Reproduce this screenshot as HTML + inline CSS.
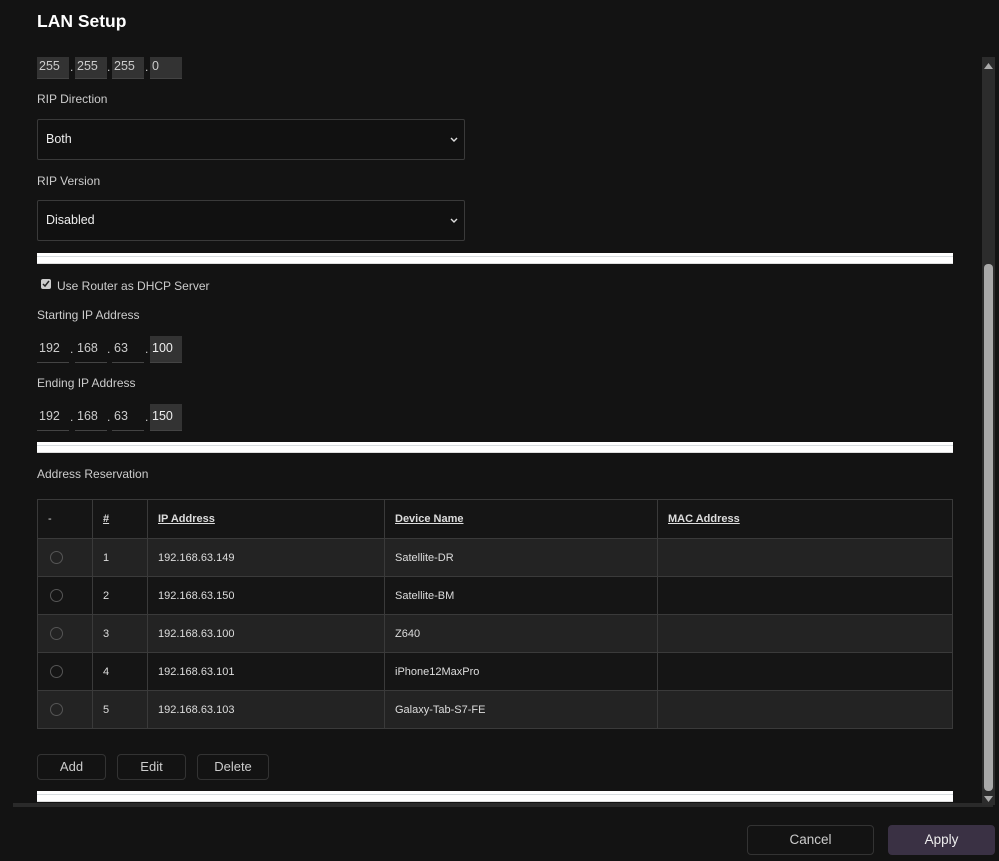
<!DOCTYPE html>
<html><head><style>
*{margin:0;padding:0;box-sizing:border-box}
body{width:999px;height:861px;background:#131313;font-family:"Liberation Sans",sans-serif;color:#ddd;position:relative;overflow:hidden}
.a{position:absolute}
.lbl{position:absolute;left:37px;font-size:12px;color:#ccc}
.oct{position:absolute;height:22px;width:32px;font-size:12.5px;color:#ccc;padding:2px 0 0 2px;border-bottom:1px solid #444}
.dot{position:absolute;font-size:12px;color:#ccc}
.sel{position:absolute;left:37px;width:428px;height:41px;border:1px solid #3a3a3a;background:#111;border-radius:2px;font-size:12.5px;color:#eee;padding:12px 0 0 8px}
.sel svg{position:absolute;right:6px;top:17px}
.bar{position:absolute;left:37px;width:916px;height:11px;background:#fff;border-bottom:1px solid #ddd}
.bar:after{content:"";position:absolute;left:0;right:0;top:3px;height:1px;background:#d8dde0}
table{position:absolute;left:37px;top:499px;width:916px;border-collapse:collapse;font-size:11px;color:#ddd}
td{border:1.5px solid #3a3a3a;height:38px;padding-left:10px}
tr.h td{height:39px;background:#151515;font-weight:bold;text-decoration:underline}
tr.o td{background:#232323}
tr.e td{background:#151515}
.r{display:inline-block;width:13px;height:13px;border:1px solid #555;border-radius:50%;margin-left:2px;vertical-align:middle}
.btn{position:absolute;height:26px;border:1px solid #333;border-radius:4px;background:#131313;font-size:13px;color:#ccc;text-align:center;line-height:24px}
</style></head><body>
<div class="a" style="left:37px;top:11px;font-size:17.5px;font-weight:bold;color:#fff">LAN Setup</div>

<div class="oct" style="left:37px;top:57px;background:#333">255</div><div class="dot" style="left:70px;top:60px">.</div>
<div class="oct" style="left:75px;top:57px;background:#333">255</div><div class="dot" style="left:107px;top:60px">.</div>
<div class="oct" style="left:112px;top:57px;background:#333">255</div><div class="dot" style="left:145px;top:60px">.</div>
<div class="oct" style="left:150px;top:57px;background:#333">0</div>

<div class="lbl" style="top:92px">RIP Direction</div>
<div class="sel" style="top:119px">Both<svg width="8" height="6" viewBox="0 0 8 6"><path d="M1 1l3 3 3-3" stroke="#ddd" stroke-width="1.4" fill="none"/></svg></div>
<div class="lbl" style="top:174px">RIP Version</div>
<div class="sel" style="top:200px">Disabled<svg width="8" height="6" viewBox="0 0 8 6"><path d="M1 1l3 3 3-3" stroke="#ddd" stroke-width="1.4" fill="none"/></svg></div>

<div class="bar" style="top:253px"></div>

<div class="a" style="left:41px;top:279px;width:10px;height:10px;background:#ccc;border-radius:2px"><svg width="10" height="10" viewBox="0 0 10 10" style="display:block"><path d="M2 5l2 2 4-5" stroke="#222" stroke-width="1.5" fill="none"/></svg></div>
<div class="lbl" style="left:57px;top:279px">Use Router as DHCP Server</div>
<div class="lbl" style="top:308px">Starting IP Address</div>
<div class="oct" style="left:37px;top:336px;padding-top:5px;height:27px">192</div><div class="dot" style="left:70px;top:342px">.</div>
<div class="oct" style="left:75px;top:336px;padding-top:5px;height:27px">168</div><div class="dot" style="left:107px;top:342px">.</div>
<div class="oct" style="left:112px;top:336px;padding-top:5px;height:27px">63</div><div class="dot" style="left:145px;top:342px">.</div>
<div class="oct" style="left:150px;top:336px;padding-top:5px;height:27px;background:#333;color:#eee">100</div>
<div class="lbl" style="top:376px">Ending IP Address</div>
<div class="oct" style="left:37px;top:404px;padding-top:5px;height:27px">192</div><div class="dot" style="left:70px;top:410px">.</div>
<div class="oct" style="left:75px;top:404px;padding-top:5px;height:27px">168</div><div class="dot" style="left:107px;top:410px">.</div>
<div class="oct" style="left:112px;top:404px;padding-top:5px;height:27px">63</div><div class="dot" style="left:145px;top:410px">.</div>
<div class="oct" style="left:150px;top:404px;padding-top:5px;height:27px;background:#333;color:#eee">150</div>

<div class="bar" style="top:442px"></div>
<div class="lbl" style="top:467px">Address Reservation</div>

<table>
<colgroup><col style="width:55px"><col style="width:55px"><col style="width:237px"><col style="width:273px"><col></colgroup>
<tr class="h"><td style="text-decoration:none;font-weight:normal">-</td><td>#</td><td>IP Address</td><td>Device Name</td><td>MAC Address</td></tr>
<tr class="o"><td><span class="r"></span></td><td>1</td><td>192.168.63.149</td><td>Satellite-DR</td><td></td></tr>
<tr class="e"><td><span class="r"></span></td><td>2</td><td>192.168.63.150</td><td>Satellite-BM</td><td></td></tr>
<tr class="o"><td><span class="r"></span></td><td>3</td><td>192.168.63.100</td><td>Z640</td><td></td></tr>
<tr class="e"><td><span class="r"></span></td><td>4</td><td>192.168.63.101</td><td>iPhone12MaxPro</td><td></td></tr>
<tr class="o"><td><span class="r"></span></td><td>5</td><td>192.168.63.103</td><td>Galaxy-Tab-S7-FE</td><td></td></tr>
</table>

<div class="btn" style="left:37px;top:754px;width:69px">Add</div>
<div class="btn" style="left:117px;top:754px;width:69px">Edit</div>
<div class="btn" style="left:197px;top:754px;width:72px">Delete</div>
<div class="bar" style="top:791px"></div>

<div class="a" style="left:13px;top:803px;width:980px;height:4px;background:#2a2a2a"></div>
<div class="a" style="left:982px;top:57px;width:13px;height:748px;background:#2c2c2c"></div>
<div class="a" style="left:984px;top:264px;width:9px;height:527px;background:#a8a8a8;border-radius:4px"></div>
<svg class="a" style="left:984px;top:63px" width="9" height="6"><path d="M0 6L4.5 0 9 6z" fill="#aaa"/></svg>
<svg class="a" style="left:984px;top:796px" width="9" height="6"><path d="M0 0L4.5 6 9 0z" fill="#aaa"/></svg>

<div class="btn" style="left:747px;top:825px;width:127px;height:30px;line-height:28px;font-size:13.5px">Cancel</div>
<div class="btn" style="left:888px;top:825px;width:107px;height:30px;line-height:28px;background:#3a3144;border-color:#3a3144;color:#eee;font-size:13.5px">Apply</div>
</body></html>
